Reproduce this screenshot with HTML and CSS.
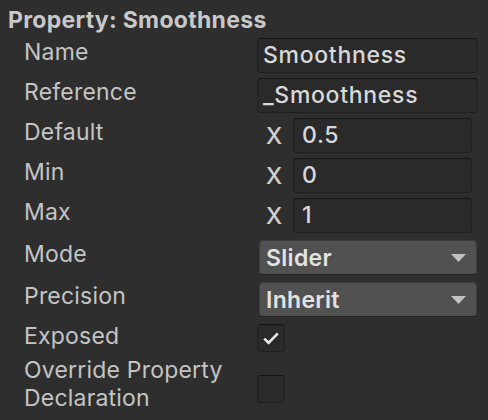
FILE: index.html
```html
<!DOCTYPE html>
<html>
<head>
<meta charset="utf-8">
<link rel="stylesheet" href="styles.css">
</head>
<body>
<div class="panel">
  <div class="title">Property: Smoothness</div>
  <div class="row">
    <div class="label">Name</div>
    <div class="ctrl"><div class="field text">Smoothness</div></div>
  </div>
  <div class="row">
    <div class="label">Reference</div>
    <div class="ctrl"><div class="field text">_Smoothness</div></div>
  </div>
  <div class="row">
    <div class="label">Default</div>
    <div class="ctrl vec"><span class="axis">X</span><div class="field num">0.5</div></div>
  </div>
  <div class="row">
    <div class="label">Min</div>
    <div class="ctrl vec"><span class="axis">X</span><div class="field num">0</div></div>
  </div>
  <div class="row">
    <div class="label">Max</div>
    <div class="ctrl vec"><span class="axis">X</span><div class="field num">1</div></div>
  </div>
  <div class="row row-dd">
    <div class="label">Mode</div>
    <div class="ctrl"><div class="dropdown"><span>Slider</span><svg class="arrow" width="15" height="8" viewBox="0 0 15 8"><path d="M0 0H15L7.5 8Z" fill="#c2c2c2"/></svg></div></div>
  </div>
  <div class="row row-dd2">
    <div class="label">Precision</div>
    <div class="ctrl"><div class="dropdown"><span>Inherit</span><svg class="arrow" width="15" height="8" viewBox="0 0 15 8"><path d="M0 0H15L7.5 8Z" fill="#c2c2c2"/></svg></div></div>
  </div>
  <div class="row row-check">
    <div class="label">Exposed</div>
    <div class="ctrl"><div class="check"><svg width="16" height="13" viewBox="0 0 16 13"><path d="M1.2 6.6L5.6 10.8L14.8 1.4" fill="none" stroke="#e6e6e6" stroke-width="2.6"/></svg></div></div>
  </div>
  <div class="row row-check2">
    <div class="label">Override Property<br>Declaration</div>
    <div class="ctrl"><div class="check"></div></div>
  </div>
</div>
</body>
</html>
```
FILE: styles.css
```css
html, body {
  margin: 0;
  padding: 0;
  background: #2e2e2e;
}
body {
  font-family: Inter, "Noto Sans", sans-serif;
  font-size: 23px;
  letter-spacing: 0.2px;
  color: #c4c4c4;
  width: 488px;
  height: 420px;
  overflow: hidden;
}
.panel {
  padding-top: 6px;
}
.title {
  padding-left: 8px;
  font-weight: 700;
  letter-spacing: 0.3px;
  line-height: 28px;
  height: 32px;
  color: #c8c8c8;
}
.row {
  display: flex;
  align-items: flex-start;
  height: 40px;
}
.label {
  width: 233px;
  padding-left: 24px;
  line-height: 28px;
  flex: none;
}
.ctrl {
  width: 221px;
  display: flex;
  align-items: center;
}
.field {
  box-sizing: border-box;
  height: 35px;
  width: 221px;
  background: #2a2a2a;
  border: 1px solid #202020;
  border-top-color: #141414;
  border-radius: 4px;
  color: #d8d8d8;
  font-weight: 500;
  letter-spacing: 0.7px;
  line-height: 33px;
  padding-left: 5px;
}
.vec {
  padding-left: 9px;
  box-sizing: border-box;
}
.axis {
  width: 27px;
  flex: none;
  color: #d0d0d0;
  font-weight: 500;
}
.field.num {
  width: 179px;
  padding-left: 8px;
}
.row-dd {
  height: 42px;
  padding-top: 2px;
}
.row-dd2 {
  height: 40px;
}
.dropdown {
  box-sizing: border-box;
  margin-left: 2px;
  width: 218px;
  height: 35px;
  background: #515151;
  border: 1px solid #3b3b3b;
  border-bottom-color: #232323;
  border-radius: 4px;
  display: flex;
  align-items: center;
  justify-content: space-between;
  padding: 0 10px 0 6px;
  color: #e2e2e2;
  font-weight: 600;
  letter-spacing: 0.3px;
}
.arrow {
  display: block;
}
.row-check {
  height: 34px;
}
.row-check .ctrl {
  padding-top: 2px;
}
.check {
  box-sizing: border-box;
  width: 28px;
  height: 28px;
  background: #2a2a2a;
  border: 1px solid #202020;
  border-top-color: #141414;
  border-radius: 4px;
  display: flex;
  align-items: center;
  justify-content: center;
}
.row-check2 {
  height: 66px;
}
.row-check2 .ctrl {
  padding-top: 19px;
}
```
